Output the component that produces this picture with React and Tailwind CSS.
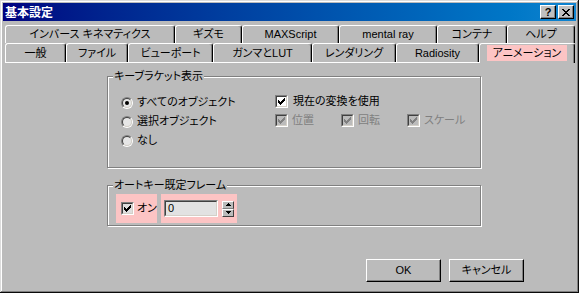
import React from 'react';

const topTabs = [
  { label: 'インバース キネマティクス', w: 'w-[170px]' },
  { label: 'ギズモ', w: 'w-[67px]' },
  { label: 'MAXScript', w: 'w-[97px]' },
  { label: 'mental ray', w: 'w-[98px]' },
  { label: 'コンテナ', w: 'w-[70px]' },
  { label: 'ヘルプ', w: 'w-[68px]' },
];

const frontTabs = [
  { label: '一般', w: 'w-[61px]' },
  { label: 'ファイル', w: 'w-[62px]' },
  { label: 'ビューポート', w: 'w-[85px]' },
  { label: 'ガンマとLUT', w: 'w-[99px]' },
  { label: 'レンダリング', w: 'w-[84px]' },
  { label: 'Radiosity', w: 'w-[83px]' },
  { label: 'アニメーション', w: 'w-[96px]', selected: true },
];

// classic 7x7 check mark, drawn pixel by pixel
const CHECK = 'M6 0h1v1h-1z M5 1h2v1h-2z M0 2h1v1h-1z M4 2h3v1h-3z M0 3h2v1h-2z M3 3h3v1h-3z M0 4h5v1h-5z M1 5h3v1h-3z M2 6h1v1h-1z';
const CLOSE = 'M0 0h2v1h-2z M6 0h2v1h-2z M1 1h2v1h-2z M5 1h2v1h-2z M2 2h4v1h-4z M3 3h2v1h-2z M2 4h4v1h-4z M1 5h2v1h-2z M5 5h2v1h-2z M0 6h2v1h-2z M6 6h2v1h-2z';

const Check = ({ disabled, fill = 'bg-white' }) => (
  <span className="flex w-[13px] h-[13px] shrink-0 border border-t-[#808080] border-l-[#808080] border-r-white border-b-white">
    <span className={`flex flex-1 items-center justify-center border border-t-[#404040] border-l-[#404040] border-r-[#d4d0c8] border-b-[#d4d0c8] ${disabled ? 'bg-[#bbbbbb]' : fill}`}>
      <svg width="7" height="7" viewBox="0 0 7 7" shapeRendering="crispEdges">
        <path d={CHECK} fill={disabled ? '#808080' : '#000'} />
      </svg>
    </span>
  </span>
);

const Radio = ({ on }) => (
  <span className="flex w-[12px] h-[12px] shrink-0 rounded-full border border-t-[#808080] border-l-[#808080] border-r-white border-b-white">
    <span className="flex flex-1 items-center justify-center rounded-full border border-t-[#404040] border-l-[#404040] border-r-[#d4d0c8] border-b-[#d4d0c8] bg-[#e6e6e6]">
      {on && <span className="w-[4px] h-[4px] rounded-full bg-black" />}
    </span>
  </span>
);

const Button = ({ children }) => (
  <button className="flex w-[75px] h-[23px] items-center justify-center border border-t-white border-l-white border-r-black border-b-black shadow-[inset_-1px_-1px_0_#808080] text-[11px] text-black">
    {children}
  </button>
);

const TitleButton = ({ children }) => (
  <span className="flex w-[16px] h-[14px] items-center justify-center bg-[#c0c0c0] border border-t-white border-l-white border-r-black border-b-black shadow-[inset_-1px_-1px_0_#808080]">
    {children}
  </span>
);

export default function App() {
  return (
    <div className="w-[579px] h-[293px] p-[3px] bg-[#bbbbbb] shadow-[inset_-1px_-1px_0_#0a0a0a,inset_1px_1px_0_#dcdcdc,inset_-2px_-2px_0_#808080,inset_2px_2px_0_#fff] font-['Liberation_Sans','Noto_Sans_CJK_JP',sans-serif] [font-feature-settings:'palt'] text-[11px] text-black leading-none overflow-hidden">
      {/* Title bar */}
      <div className="flex h-[18px] items-center justify-between bg-linear-to-r from-[#000080] to-[#1084d0] pl-[2px] pr-[2px]">
        <span className="text-white font-bold text-[12px] font-['Noto_Sans_CJK_JP',sans-serif]">基本設定</span>
        <div className="flex gap-[2px]">
          <TitleButton><span className="font-bold text-[11px] font-['Liberation_Sans',sans-serif]">?</span></TitleButton>
          <TitleButton>
            <svg width="8" height="7" viewBox="0 0 8 7" shapeRendering="crispEdges"><path d={CLOSE} fill="#000" /></svg>
          </TitleButton>
        </div>
      </div>

      {/* Tabs */}
      <div className="mt-[4px] ml-[2px]">
        <div className="flex h-[18px]">
          {topTabs.map((t) => (
            <div key={t.label} className={`${t.w} flex items-center justify-center pb-[1px] border-l border-t border-white border-r border-r-black shadow-[inset_-1px_0_0_#808080] rounded-t-[3px]`}>
              {t.label}
            </div>
          ))}
        </div>
        <div className="flex h-[19px] items-start">
          {frontTabs.map((t) =>
            t.selected ? (
              <div key={t.label} className={`${t.w} relative z-10 h-[20px] flex items-start justify-center pt-[1px] bg-[#bbbbbb] border-l border-t border-white border-r border-r-black shadow-[inset_-1px_0_0_#808080] rounded-t-[3px]`}>
                <span className="flex h-[16px] items-center px-[6px] bg-[#fcc4c4]">{t.label}</span>
              </div>
            ) : (
              <div key={t.label} className={`${t.w} h-[19px] flex items-center justify-center border-l border-t border-white border-r border-r-black shadow-[inset_-1px_0_0_#808080] rounded-t-[3px]`}>
                {t.label}
              </div>
            )
          )}
        </div>

        {/* Panel */}
        <div className="w-[570px] border-t border-white">
          {/* キーブラケット表示 */}
          <div className="relative ml-[102px] mt-[13px] w-[374px] h-[92px] border border-[#808080] shadow-[inset_1px_1px_0_#fff,1px_1px_0_#fff] pt-[16px] pl-[13px] flex">
            <span className="absolute -top-[9px] left-[5px] h-[16px] flex items-center px-[1px] bg-[#bbbbbb]">キーブラケット表示</span>
            <div className="w-[154px] flex flex-col">
              {['すべてのオブジェクト', '選択オブジェクト', 'なし'].map((l, i) => (
                <div key={l} className="flex h-[19px] items-center gap-[4px]">
                  <Radio on={i === 0} />
                  <span>{l}</span>
                </div>
              ))}
            </div>
            <div className="flex flex-col -mt-[1px]">
              <div className="flex h-[19px] items-center gap-[5px]">
                <Check />
                <span>現在の変換を使用</span>
              </div>
              <div className="flex h-[19px] items-center text-[#808080]">
                {['位置', '回転', 'スケール'].map((l) => (
                  <div key={l} className="w-[66px] flex items-center gap-[4px]">
                    <Check disabled />
                    <span>{l}</span>
                  </div>
                ))}
              </div>
            </div>
          </div>

          {/* オートキー既定フレーム */}
          <div className="relative ml-[102px] mt-[17px] w-[374px] h-[41px] border border-[#808080] shadow-[inset_1px_1px_0_#fff,1px_1px_0_#fff] pt-[8px] pl-[8px] flex gap-[4px] items-start">
            <span className="absolute -top-[9px] left-[5px] h-[16px] flex items-center px-[1px] bg-[#bbbbbb]">オートキー既定フレーム</span>
            <div className="flex w-[41px] h-[29px] items-center gap-[3px] pl-[5px] bg-[#fcc4c4]">
              <Check fill="bg-[#dedede]" />
              <span>オン</span>
            </div>
            <div className="flex w-[76px] h-[29px] items-center gap-[4px] pl-[3px] bg-[#fcc4c4]">
              <div className="flex w-[54px] h-[17px] border border-t-[#808080] border-l-[#808080] border-r-white border-b-white">
                <div className="flex flex-1 items-center pl-[2px] border border-t-[#404040] border-l-[#404040] border-r-[#d4d0c8] border-b-[#d4d0c8] bg-[#e2e2e2]">0</div>
              </div>
              <div className="flex flex-col w-[12px] h-[16px]">
                <span className="flex flex-1 items-center justify-center border border-t-white border-l-white border-r-[#404040] border-b-[#808080] bg-[#bbbbbb]">
                  <svg width="5" height="3" viewBox="0 0 5 3" shapeRendering="crispEdges"><path d="M2 0h1v1h-1z M1 1h3v1h-3z M0 2h5v1h-5z" fill="#000" /></svg>
                </span>
                <span className="flex flex-1 items-center justify-center border border-t-white border-l-white border-r-[#404040] border-b-[#404040] bg-[#bbbbbb]">
                  <svg width="5" height="3" viewBox="0 0 5 3" shapeRendering="crispEdges"><path d="M0 0h5v1h-5z M1 1h3v1h-3z M2 2h1v1h-1z" fill="#000" /></svg>
                </span>
              </div>
            </div>
          </div>

          {/* Buttons */}
          <div className="flex gap-[8px] ml-[361px] mt-[33px]">
            <Button>OK</Button>
            <Button>キャンセル</Button>
          </div>
        </div>
      </div>
    </div>
  );
}
